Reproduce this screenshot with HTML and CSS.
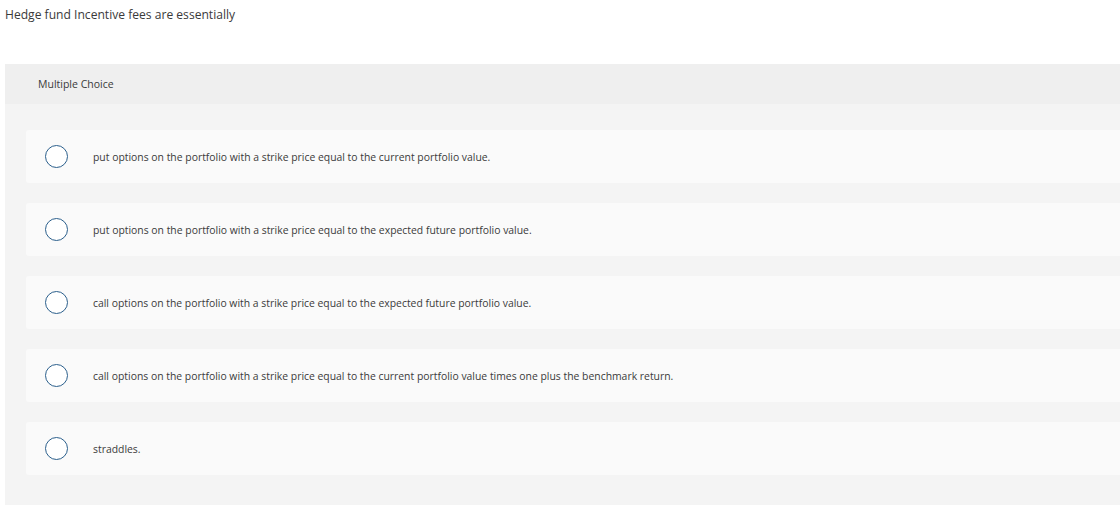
FILE: index.html
```html
<!DOCTYPE html>
<html lang="en">
<head>
    <meta charset="UTF-8">
    <title>Question</title>
    <link rel="stylesheet" href="styles.css">
</head>
<body>
    <div class="question">
        <p class="prompt">Hedge fund Incentive fees are essentially</p>

        <div class="panel">
            <div class="panel-head">Multiple Choice</div>
            <div class="choices">
                <label class="choice"><span class="radio"></span><span class="choice-text">put options on the portfolio with a strike price equal to the current portfolio value.</span></label>
                <label class="choice"><span class="radio"></span><span class="choice-text">put options on the portfolio with a strike price equal to the expected future portfolio value.</span></label>
                <label class="choice"><span class="radio"></span><span class="choice-text">call options on the portfolio with a strike price equal to the expected future portfolio value.</span></label>
                <label class="choice"><span class="radio"></span><span class="choice-text">call options on the portfolio with a strike price equal to the current portfolio value times one plus the benchmark return.</span></label>
                <label class="choice"><span class="radio"></span><span class="choice-text">straddles.</span></label>
            </div>
        </div>
    </div>
</body>
</html>
```

FILE: styles.css
```css
body {
    margin: 0;
    background-color: #ffffff;
    color: #3a3a3a;
    font-family: 'Open Sans', 'Liberation Sans', Arial, sans-serif;
    overflow: hidden;
}
.question {
    padding: 0 0 0 5px;
}
.prompt {
    margin: 0;
    padding-top: 7px;
    height: 57px;
    font-size: 12.1px;
    line-height: 16px;
}
.panel {
    background-color: #f4f4f4;
    min-height: 441px;
}
.panel-head {
    background-color: #efefef;
    height: 40px;
    line-height: 40px;
    padding-left: 33px;
    font-size: 10.5px;
}
.choices {
    display: flex;
    flex-direction: column;
    gap: 20px;
    padding: 26px 0 0 21px;
}
.choice {
    display: flex;
    align-items: center;
    height: 53px;
    background-color: #fafafa;
    border-radius: 3px 0 0 3px;
    cursor: pointer;
}
.radio {
    width: 21px;
    height: 21px;
    border: 1.5px solid #2b5f8c;
    border-radius: 50%;
    background-color: #ffffff;
    margin-left: 19px;
    margin-right: 25px;
    flex-shrink: 0;
}
.choice-text {
    font-size: 10.4px;
}
```
